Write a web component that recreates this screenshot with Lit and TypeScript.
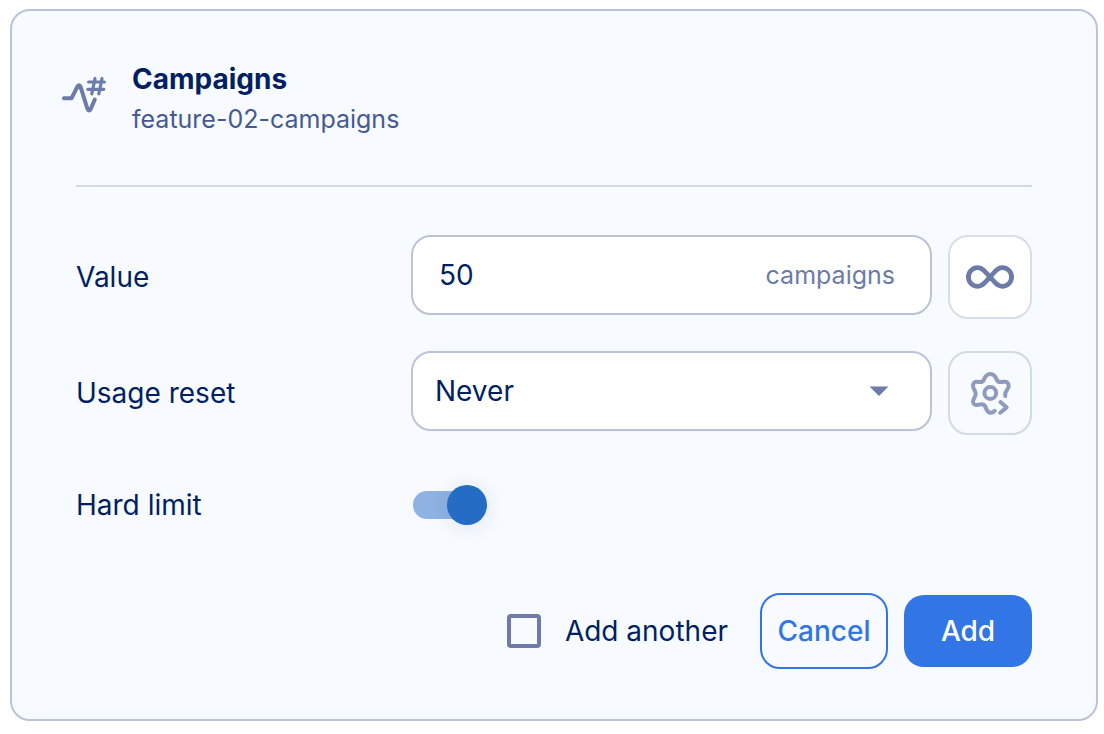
import { LitElement, html, css } from "lit";
import { customElement, state } from "lit/decorators.js";

@customElement("app-root")
export class AppRoot extends LitElement {
  static styles = css`
    :host {
      display: block;
      padding: 9px 6px 12px 10px;
      background: #fff;
      color: #021f62;
      font-family: Inter, "Liberation Sans", sans-serif;
      font-size: 28px;
      line-height: 40px;
    }
    * {
      box-sizing: border-box;
    }
    input,
    select,
    button {
      margin: 0;
      font: inherit;
      color: inherit;
    }
    svg {
      display: block;
      fill: none;
      stroke: currentColor;
      stroke-linecap: round;
      stroke-linejoin: round;
    }
    .card {
      padding: 48px 48px 50px;
      border: 2px solid #bcc2d9;
      border-radius: 20px;
      background: #f7fbff;
    }
    .header {
      display: flex;
      align-items: flex-start;
      gap: 24px;
      padding-bottom: 46px;
    }
    .feature-icon {
      padding-top: 12px;
      color: #6d7ba8;
    }
    .title {
      margin: 0;
      font-size: 28px;
      font-weight: 700;
    }
    .slug {
      margin: 0;
      font-size: 25px;
      color: #465a91;
    }
    .form {
      display: flex;
      flex-direction: column;
      gap: 32px;
      margin: 0 16px;
      padding-top: 48px;
      border-top: 2px solid #d1d9e4;
    }
    .row {
      display: grid;
      grid-template-columns: minmax(0, 335px) minmax(0, 1fr);
      align-items: center;
      min-height: 76px;
    }
    .controls {
      display: flex;
      align-items: flex-start;
      gap: 16px;
    }
    .field {
      flex: 1;
      min-width: 0;
      height: 80px;
      border: 2px solid #bcc2d9;
      border-radius: 20px;
      background: #fff;
    }
    .value-field {
      display: flex;
      align-items: center;
      padding: 0 35px 0 26px;
    }
    .value-input {
      flex: 1;
      min-width: 0;
      padding: 0;
      border: 0;
      outline: 0;
      background: none;
    }
    .unit {
      font-size: 25px;
      color: #6d7ba8;
    }
    .select-field {
      display: grid;
      align-items: center;
    }
    .select,
    .caret {
      grid-area: 1 / 1;
    }
    .select {
      appearance: none;
      width: 100%;
      height: 100%;
      padding: 0 64px 0 22px;
      border: 0;
      border-radius: 18px;
      outline: 0;
      background: none;
    }
    .caret {
      justify-self: end;
      margin-right: 41px;
      color: #6d7ba8;
      pointer-events: none;
    }
    .caret path {
      fill: currentColor;
      stroke: none;
    }
    .icon-button {
      display: grid;
      place-items: center;
      flex: none;
      width: 84px;
      height: 84px;
      padding: 0;
      border: 2px solid #d9dde9;
      border-radius: 20px;
      background: #fff;
      color: #6d7ba8;
    }
    .icon-button:disabled {
      border-color: #d2dae6;
      background: transparent;
      color: #8e9bbf;
    }
    .switch {
      appearance: none;
      display: grid;
      align-items: center;
      width: 78px;
      height: 40px;
      padding: 0 2px;
    }
    .switch::before,
    .switch::after {
      content: "";
      grid-area: 1 / 1;
    }
    .switch::before {
      width: 68px;
      height: 28px;
      border-radius: 14px;
      background: #bcc2d9;
    }
    .switch::after {
      width: 40px;
      height: 40px;
      border-radius: 50%;
      background: #fff;
      box-shadow: 0 2px 20px rgba(20, 40, 110, 0.1);
    }
    .switch:checked::before {
      background: #8eb2e1;
    }
    .switch:checked::after {
      justify-self: end;
      background: #256cc5;
    }
    .footer {
      display: flex;
      align-items: center;
      justify-content: flex-end;
      gap: 16px;
      padding-top: 18px;
    }
    .another {
      display: flex;
      align-items: center;
      gap: 24px;
      margin-right: 16px;
    }
    .checkbox {
      appearance: none;
      width: 34px;
      height: 34px;
      border: 4px solid #6f7aa8;
      border-radius: 4px;
    }
    .checkbox:checked {
      background: #6f7aa8;
    }
    .button {
      min-width: 128px;
      padding: 16px 14px;
      border: 0;
      border-radius: 20px;
      background: #3275e4;
      color: #fff;
      font-weight: 500;
    }
    .outlined {
      border: 2px solid #3275e4;
      background: transparent;
      color: #3275e4;
    }
  `;

  @state() private hardLimit = true;

  render() {
    return html`
      <section class="card">
        <header class="header">
          <span class="feature-icon">
            <svg width="48" height="48" viewBox="0 0 48 48" aria-hidden="true">
              <path
                stroke-width="4"
                d="M4 27.3H11.5L17.4 15.6Q19.2 12.6 20.6 15.8L27.4 37.8Q29 41.4 30.8 37.8L34.8 28.5"
              />
              <path
                stroke-width="3.2"
                d="M28.6 11H44.4M27.8 18.3H43.8M35 7.6L31.8 22.8M42 7.6L38.8 22.8"
              />
            </svg>
          </span>
          <div>
            <h1 class="title">Campaigns</h1>
            <p class="slug">feature-02-campaigns</p>
          </div>
        </header>
        <form class="form" @submit=${(e: Event) => e.preventDefault()}>
          <div class="row">
            <label for="value">Value</label>
            <div class="controls">
              <div class="field value-field">
                <input class="value-input" id="value" type="text" inputmode="numeric" value="50" />
                <span class="unit">campaigns</span>
              </div>
              <button class="icon-button" type="button" aria-label="Unlimited">
                <svg width="50" height="48" viewBox="-1 0 50 48" aria-hidden="true">
                  <path
                    stroke-width="4.8"
                    d="M24 24C19.2 19.2 17 14.7 11.7 14.7A9.3 9.3 0 0 0 11.7 33.3C17 33.3 19.2 28.8 24 24C28.8 19.2 31 14.7 36.3 14.7A9.3 9.3 0 0 1 36.3 33.3C31 33.3 28.8 28.8 24 24Z"
                  />
                </svg>
              </button>
            </div>
          </div>
          <div class="row">
            <label for="reset">Usage reset</label>
            <div class="controls">
              <div class="field select-field">
                <select class="select" id="reset">
                  <option>Never</option>
                  <option>Monthly</option>
                  <option>Yearly</option>
                </select>
                <svg class="caret" width="20" height="10" viewBox="0 0 20 10" aria-hidden="true">
                  <path d="M0.5 0.5H19.5L10 10Z" />
                </svg>
              </div>
              <button class="icon-button" type="button" aria-label="Reset settings" disabled>
                <svg width="48" height="48" viewBox="0 0 48 48" aria-hidden="true">
                  <path
                    stroke-width="4"
                    d="M39.3 27V24.5C39.3 22 42.7 20 42.7 17C42.7 14 40.5 12.2 37.5 12.8C34.5 13.4 31.6 13.2 30.6 10.5C29.5 7.5 28 5 24.3 5C20.6 5 19.1 7.5 18 10.5C17 13.2 14.1 13.4 11.1 12.8C8.4 12.2 7 14.5 7 17C7 20 9.7 21.5 9.7 24.8C9.7 28.1 7 29.8 7 32.5C7 35.2 9 36.4 12 35.8C16 34.6 18.5 35.2 19.5 38C20.5 41 21.4 43.7 24.5 43.7C26.2 43.7 27.6 43 28.7 41.8"
                  />
                  <circle stroke-width="4" cx="24.3" cy="24" r="5.9" />
                  <path stroke-width="4" d="M34.5 33L40.7 38.4L34.2 43.7" />
                </svg>
              </button>
            </div>
          </div>
          <div class="row">
            <label for="limit">Hard limit</label>
            <input
              class="switch"
              id="limit"
              type="checkbox"
              role="switch"
              .checked=${this.hardLimit}
              @change=${(e: Event) => (this.hardLimit = (e.target as HTMLInputElement).checked)}
            />
          </div>
          <div class="footer">
            <label class="another">
              <input class="checkbox" type="checkbox" />
              Add another
            </label>
            <button class="button outlined" type="button">Cancel</button>
            <button class="button" type="submit">Add</button>
          </div>
        </form>
      </section>
    `;
  }
}
